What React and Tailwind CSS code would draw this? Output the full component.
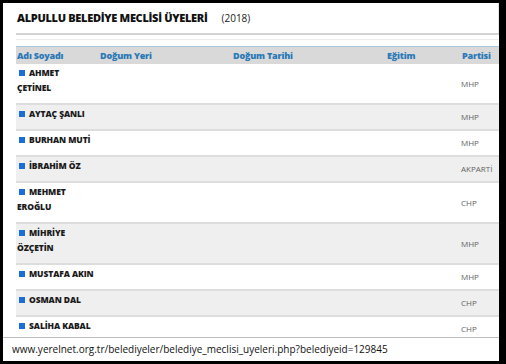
import React from 'react';

const members = [
  { name: ['AHMET', 'ÇETİNEL'], party: 'MHP' },
  { name: ['AYTAÇ ŞANLI'], party: 'MHP' },
  { name: ['BURHAN MUTİ'], party: 'MHP' },
  { name: ['İBRAHİM ÖZ'], party: 'AKPARTİ' },
  { name: ['MEHMET', 'EROĞLU'], party: 'CHP' },
  { name: ['MİHRİYE', 'ÖZÇETİN'], party: 'MHP' },
  { name: ['MUSTAFA AKIN'], party: 'MHP' },
  { name: ['OSMAN DAL'], party: 'CHP' },
  { name: ['SALİHA KABAL'], party: 'CHP' },
];

const cols = 'grid grid-cols-[81px_133px_154px_75px_1fr]';

function App() {
  return (
    <div className="w-[506px] h-[364px] bg-black pl-[3px] pt-[3px] pr-[7px] pb-[3px] font-['Open_Sans',sans-serif]">
      <div className="bg-white h-full flex flex-col">
        {/* Page content */}
        <div className="flex-1 overflow-hidden pl-[13px]">
          <div className="h-[30px] flex items-center gap-[14px] pl-[1px] pt-[1px] border-r border-[#e4e4e4]">
            <h1 className="text-[11px] font-extrabold text-[#111] tracking-[-0.3px]">ALPULLU BELEDİYE MECLİSİ ÜYELERİ</h1>
            <span className="text-[10px] text-[#222]">(2018)</span>
          </div>
          <div className="h-[2px] bg-[#d2d2d2]" />
          <div className="h-[4px]" />
          <div className="h-px bg-[#ececec]" />
          <div className="h-[6px]" />

          {/* Table */}
          <div className="text-[9px]">
            <div className={`${cols} h-[18px] items-center bg-[#d9d9d9] border-t border-[#a9c9e2] font-extrabold text-[#2a78b6] tracking-[-0.2px]`}>
              <div className="pl-[1px]">Adı Soyadı</div>
              <div className="pl-[3px]">Doğum Yeri</div>
              <div className="pl-[3px]">Doğum Tarihi</div>
              <div className="pl-[3px]">Eğitim</div>
              <div className="pl-[3px]">Partisi</div>
            </div>
            {members.map((m, i) => (
              <div
                key={i}
                className={`${cols} ${i === 0 ? '' : 'border-t-2 border-[#dddddd]'} ${i % 2 ? 'bg-[#efefef]' : 'bg-white'}`}
              >
                <div className="pt-[1px] pb-[8px] pl-[1px] leading-[15px] font-extrabold text-[#1a1a1a] text-[8.5px] tracking-[-0.1px]">
                  <span className="inline-block w-[6px] h-[6px] bg-[#1b6ed6] ml-[2px] mr-[4px]" />
                  {m.name[0]}
                  {m.name[1] && <br />}
                  {m.name[1]}
                </div>
                <div />
                <div />
                <div />
                <div className="flex items-center pl-[2px] text-[8px] text-[#5f5f5f]">{m.party}</div>
              </div>
            ))}
          </div>
        </div>

        {/* Footer URL */}
        <div className="h-[24px] border-t border-[#bdbdbd] flex items-center pl-[9px] text-[10px] text-[#111]">
          www.yerelnet.org.tr/belediyeler/belediye_meclisi_uyeleri.php?belediyeid=129845
        </div>
      </div>
    </div>
  );
}

export default App;
